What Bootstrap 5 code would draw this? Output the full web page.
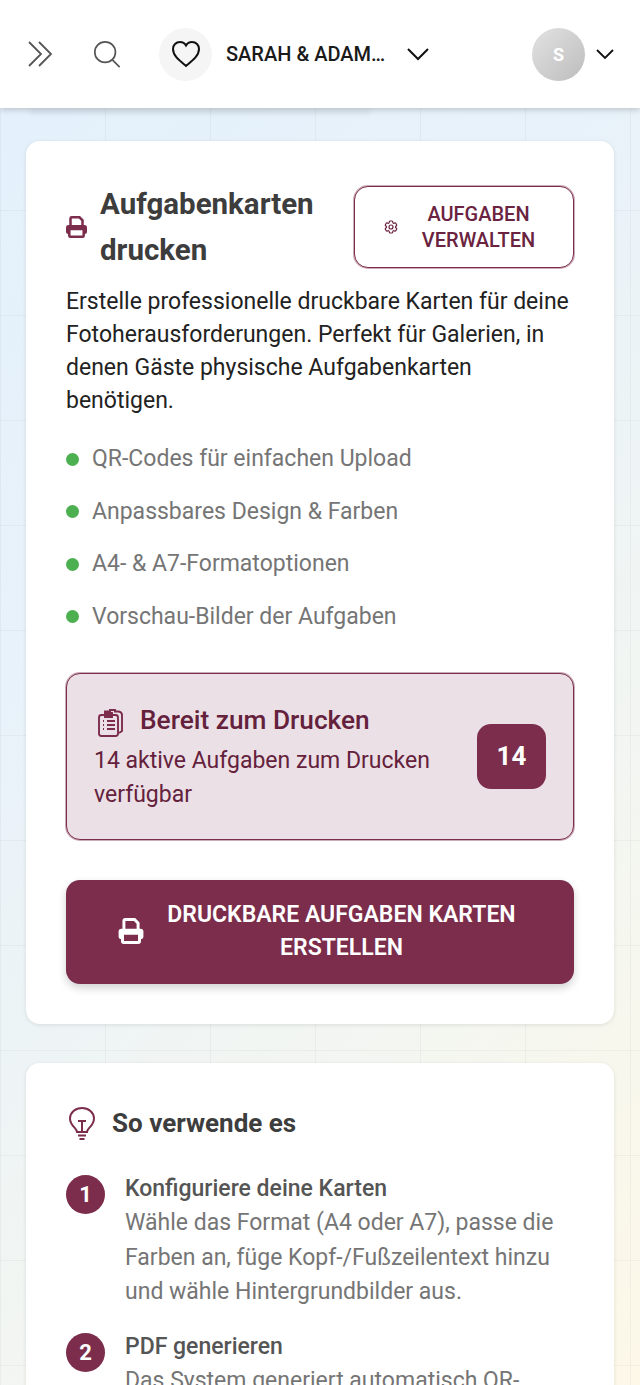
<!DOCTYPE html>
<html lang="de">

<head>
    <meta charset="UTF-8" />
    <title>Aufgabenkarten drucken</title>
    <link rel="stylesheet" href="https://cdn.jsdelivr.net/npm/bootstrap@5.3.0/dist/css/bootstrap.min.css" />
    <style>
        html,
        body {
            height: 1385px;
            overflow: hidden;
        }

        body {
            font-family: Roboto, "Liberation Sans", sans-serif;
            font-size: 23px;
            color: #222;
            background-color: #eef4f4;
            background-image:
                linear-gradient(to right, rgba(0, 0, 0, .035) 1px, transparent 1px),
                linear-gradient(to bottom, rgba(0, 0, 0, .035) 1px, transparent 1px),
                linear-gradient(135deg, #e3f0fb 0%, #e8f2fa 35%, #f3f6f1 70%, #fdf8e8 100%);
            background-size: 105px 105px, 105px 105px, 100% 100%;
        }

        .top-bar {
            height: 108px;
            background: #fff;
            padding: 0 25px 0 26px;
            box-shadow: 0 2px 6px rgba(0, 0, 0, .18);
            position: relative;
            z-index: 2;
        }

        .ghost-strip {
            height: 7px;
            width: 340px;
            margin-left: 30px;
            background: rgba(0, 0, 0, .035);
            filter: blur(2px);
        }

        .search-ico {
            margin-left: 36px;
        }

        .event-circle {
            width: 53px;
            height: 53px;
            border-radius: 50%;
            background: #f5f5f5;
            margin-left: 37px;
        }

        .event-name {
            font-size: 20px;
            font-weight: 500;
            width: 157px;
            margin-left: 14px;
            white-space: nowrap;
            color: #1a1a1a;
        }

        .event-caret {
            margin-left: 23px;
        }

        .user-caret {
            margin-left: 10px;
        }

        .avatar-circle {
            width: 53px;
            height: 53px;
            border-radius: 50%;
            background: linear-gradient(135deg, #e2e2e2, #bdbdbd);
            color: #fff;
            font-size: 18px;
            font-weight: 700;
        }

        .page-wrap {
            padding: 26px 26px 0;
        }

        .panel {
            background: #fff;
            border-radius: 14px;
            padding: 40px;
            box-shadow: 0 1px 4px rgba(0, 0, 0, .1);
            margin-bottom: 39px;
        }

        .panel-1 {
            height: 883px;
        }

        .print-ico {
            margin-right: 13px;
        }

        .panel-title {
            font-size: 29.5px;
            font-weight: 700;
            line-height: 46px;
            color: #3d3d3d;
            margin: 0;
            width: 230px;
        }

        .manage-btn {
            width: 220px;
            height: 82px;
            border: 1px solid #7b2d4b;
            box-shadow: 0 0 0 1px rgba(123, 45, 75, .4);
            border-radius: 14px;
            color: #6a2340;
            font-size: 20px;
            font-weight: 500;
            line-height: 26px;
            text-transform: uppercase;
            background: #fff;
            padding: 0 15px 0 28px;
        }

        .intro-text {
            line-height: 33px;
            margin: 12px 0 16px;
            color: #222;
        }

        .feat-list {
            list-style: none;
            padding: 0;
            margin: 0 0 30px;
            color: #757575;
        }

        .feat-list li {
            height: 52.5px;
            gap: 13px;
        }

        .feat-dot {
            width: 13px;
            height: 13px;
            border-radius: 50%;
            background: #4caf50;
        }

        .ready-box {
            height: 167px;
            background: #ebe0e5;
            border: 1px solid #7b2d4b;
            box-shadow: 0 0 0 1px rgba(123, 45, 75, .4);
            border-radius: 14px;
            padding: 0 27px;
            color: #64213c;
        }

        .ready-text {
            width: 360px;
        }

        .ready-ico {
            margin: 0 15px 0 3px;
        }

        .ready-title {
            font-size: 26.25px;
            font-weight: 500;
            line-height: 36px;
            margin: 0 0 6px;
        }

        .ready-sub {
            line-height: 34px;
            margin: 0;
        }

        .count-tile {
            width: 69px;
            height: 65px;
            border-radius: 14px;
            background: #7b2d4b;
            color: #fff;
            font-size: 26px;
            font-weight: 700;
        }

        .create-btn {
            height: 104px;
            margin-top: 40px;
            width: 100%;
            background: #7b2d4b;
            color: #fff;
            border: 0;
            border-radius: 14px;
            font-size: 23px;
            font-weight: 600;
            line-height: 33px;
            box-shadow: 0 4px 8px rgba(0, 0, 0, .18);
            padding: 0 35px 3px 52px;
        }

        .how-head {
            margin: 4px 0 34px;
        }

        .how-ico {
            margin: 0 15px 0 1px;
        }

        .how-title {
            font-size: 26px;
            font-weight: 700;
            color: #3d3d3d;
            margin: 0;
        }

        .step-row {
            gap: 20px;
            margin-bottom: 23px;
        }

        .step-num {
            width: 39px;
            height: 39px;
            border-radius: 50%;
            background: #7b2d4b;
            color: #fff;
            font-size: 22px;
            font-weight: 700;
        }

        .step-body {
            line-height: 34.4px;
            color: #757575;
            margin-top: -3px;
        }

        .step-name {
            font-weight: 500;
            color: #555;
        }
    </style>
</head>

<body>
    <!-- Top bar -->
    <header class="top-bar d-flex align-items-center">
        <svg width="30" height="30" viewBox="0 0 30 30" fill="none" stroke="#555" stroke-width="1.8">
            <path d="M3 3l12 12L3 27M13 3l12 12-12 12" />
        </svg>
        <svg class="search-ico" width="30" height="30" viewBox="0 0 32 32" fill="none" stroke="#555" stroke-width="1.8">
            <circle cx="14" cy="14" r="11" />
            <path d="M21.5 22l8 8" />
        </svg>
        <div class="event-circle d-flex align-items-center justify-content-center">
            <svg width="30" height="28" viewBox="0 0 30 28" fill="none" stroke="#111" stroke-width="2">
                <path d="M15 26C9 21 2 16 2 9c0-4 3-7 7-7 2.500 0 4.800 1.300 6 3.500C16.200 3.300 18.500 2 21 2c4 0 7 3 7 7 0 7-7 12-13 17z" />
            </svg>
        </div>
        <div class="event-name">SARAH &amp; ADAM…</div>
        <svg class="event-caret" width="24" height="14" viewBox="0 0 24 14" fill="none" stroke="#111" stroke-width="2">
            <path d="M2 2l10 10L22 2" />
        </svg>
        <div class="avatar-circle d-flex align-items-center justify-content-center ms-auto">S</div>
        <svg class="user-caret" width="20" height="12" viewBox="0 0 20 12" fill="none" stroke="#111" stroke-width="1.800">
            <path d="M2 2l8 8 8-8" />
        </svg>
    </header>
    <div class="ghost-strip"></div>

    <main class="page-wrap">
        <!-- Print card -->
        <section class="panel panel-1">
            <div class="d-flex align-items-center justify-content-between">
                <div class="d-flex align-items-center">
                    <svg width="21" height="22" viewBox="0 0 21 22" class="print-ico flex-shrink-0">
                        <path d="M4.500 10V2.500A1.200 1.200 0 0 1 5.700 1.300H13.500l3 3V10" fill="none" stroke="#7b2d4b" stroke-width="2.500" />
                        <rect x="0" y="9" width="21" height="9" rx="2.500" fill="#7b2d4b" />
                        <rect x="3.300" y="13" width="14.400" height="7.700" rx="1" fill="#fff" stroke="#7b2d4b" stroke-width="2.500" />
                    </svg>
                    <h1 class="panel-title">Aufgabenkarten drucken</h1>
                </div>
                <button class="manage-btn d-flex align-items-center">
                    <svg width="16" height="16" viewBox="0 0 24 24" fill="none" stroke="#6a2340" stroke-width="1.800" class="flex-shrink-0">
                        <path d="M9.594 3.94c.09-.542.56-.94 1.110-.94h2.593c.55 0 1.020.398 1.110.94l.213 1.281c.063.374.313.686.645.87.074.04.147.083.22.127.324.196.72.257 1.075.124l1.217-.456a1.125 1.125 0 011.370.49l1.296 2.247a1.125 1.125 0 01-.26 1.431l-1.003.827c-.293.24-.438.613-.431.992a6.759 6.759 0 010 .255c-.007.378.138.75.43.99l1.005.828c.424.35.534.954.26 1.430l-1.298 2.247a1.125 1.125 0 01-1.369.491l-1.217-.456c-.355-.133-.75-.072-1.076.124a6.57 6.57 0 01-.22.128c-.331.183-.581.495-.644.869l-.213 1.280c-.09.543-.56.941-1.110.941h-2.594c-.55 0-1.020-.398-1.110-.94l-.213-1.281c-.062-.374-.312-.686-.644-.87a6.52 6.52 0 01-.22-.127c-.325-.196-.72-.257-1.076-.124l-1.217.456a1.125 1.125 0 01-1.369-.49l-1.297-2.247a1.125 1.125 0 01.26-1.431l1.004-.827c.292-.24.437-.613.43-.992a6.932 6.932 0 010-.255c.007-.378-.138-.75-.43-.99l-1.004-.828a1.125 1.125 0 01-.26-1.430l1.297-2.247a1.125 1.125 0 011.370-.491l1.216.456c.356.133.751.072 1.076-.124.072-.044.146-.087.22-.128.332-.183.582-.495.644-.869l.214-1.281z" />
                        <circle cx="12" cy="12" r="3" />
                    </svg>
                    <span class="flex-grow-1 text-center">Aufgaben verwalten</span>
                </button>
            </div>

            <p class="intro-text">Erstelle professionelle druckbare Karten für deine Fotoherausforderungen. Perfekt für Galerien, in denen Gäste physische Aufgabenkarten benötigen.</p>

            <ul class="feat-list">
                <li class="d-flex align-items-center"><span class="feat-dot"></span>QR-Codes für einfachen Upload</li>
                <li class="d-flex align-items-center"><span class="feat-dot"></span>Anpassbares Design &amp; Farben</li>
                <li class="d-flex align-items-center"><span class="feat-dot"></span>A4- &amp; A7-Formatoptionen</li>
                <li class="d-flex align-items-center"><span class="feat-dot"></span>Vorschau-Bilder der Aufgaben</li>
            </ul>

            <div class="ready-box d-flex align-items-center justify-content-between">
                <div class="ready-text">
                    <div class="d-flex align-items-center">
                        <svg width="28" height="30" viewBox="0 0 28 30" fill="none" stroke="#7b2d4b" stroke-width="1.900" class="ready-ico flex-shrink-0">
                            <path d="M8 6V3.500h5V2h5v1.500h3a4 4 0 0 1 4 3V23l-3 2" />
                            <rect x="2" y="7" width="19" height="21" rx="2.500" />
                            <path d="M8 5h7v4H8zM6 13h1M10 13h8M6 17h1M10 17h8M6 21h1M10 21h8" />
                        </svg>
                        <h2 class="ready-title">Bereit zum Drucken</h2>
                    </div>
                    <p class="ready-sub">14 aktive Aufgaben zum Drucken verfügbar</p>
                </div>
                <div class="count-tile d-flex align-items-center justify-content-center">14</div>
            </div>

            <button class="create-btn d-flex align-items-center">
                <svg width="26" height="26" viewBox="0 0 21 22" class="flex-shrink-0">
                    <path d="M4.500 10V2.500A1.200 1.200 0 0 1 5.700 1.300H13.500l3 3V10" fill="none" stroke="#fff" stroke-width="2.500" />
                    <rect x="0" y="9" width="21" height="9" rx="2.500" fill="#fff" />
                    <rect x="3.300" y="13" width="14.400" height="7.700" rx="1" fill="#7b2d4b" stroke="#fff" stroke-width="2.500" />
                </svg>
                <span class="flex-grow-1 text-center">DRUCKBARE AUFGABEN KARTEN ERSTELLEN</span>
            </button>
        </section>

        <!-- How to use -->
        <section class="panel">
            <div class="how-head d-flex align-items-center">
                <svg width="30" height="34" viewBox="0 0 30 34" fill="none" stroke="#7b2d4b" stroke-width="2" class="how-ico flex-shrink-0">
                    <path d="M10 25c0-4-7-6-7-13.500a12 10.500 0 0 1 24 0c0 7.500-7 9.500-7 13.500z" />
                    <path d="M11 14h8M15 14v11M11 28.500h8M12.500 32h5" />
                </svg>
                <h2 class="how-title">So verwende es</h2>
            </div>

            <div class="step-row d-flex">
                <div class="step-num d-flex align-items-center justify-content-center flex-shrink-0">1</div>
                <div class="step-body">
                    <div class="step-name">Konfiguriere deine Karten</div>
                    Wähle das Format (A4 oder A7), passe die Farben an, füge Kopf-/Fußzeilentext hinzu und wähle Hintergrundbilder aus.
                </div>
            </div>
            <div class="step-row d-flex">
                <div class="step-num d-flex align-items-center justify-content-center flex-shrink-0">2</div>
                <div class="step-body">
                    <div class="step-name">PDF generieren</div>
                    Das System generiert automatisch QR-Codes für jede Aufgabe.
                </div>
            </div>
        </section>
    </main>

    <script src="https://cdn.jsdelivr.net/npm/bootstrap@5.3.0/dist/js/bootstrap.bundle.min.js"></script>
</body>

</html>
